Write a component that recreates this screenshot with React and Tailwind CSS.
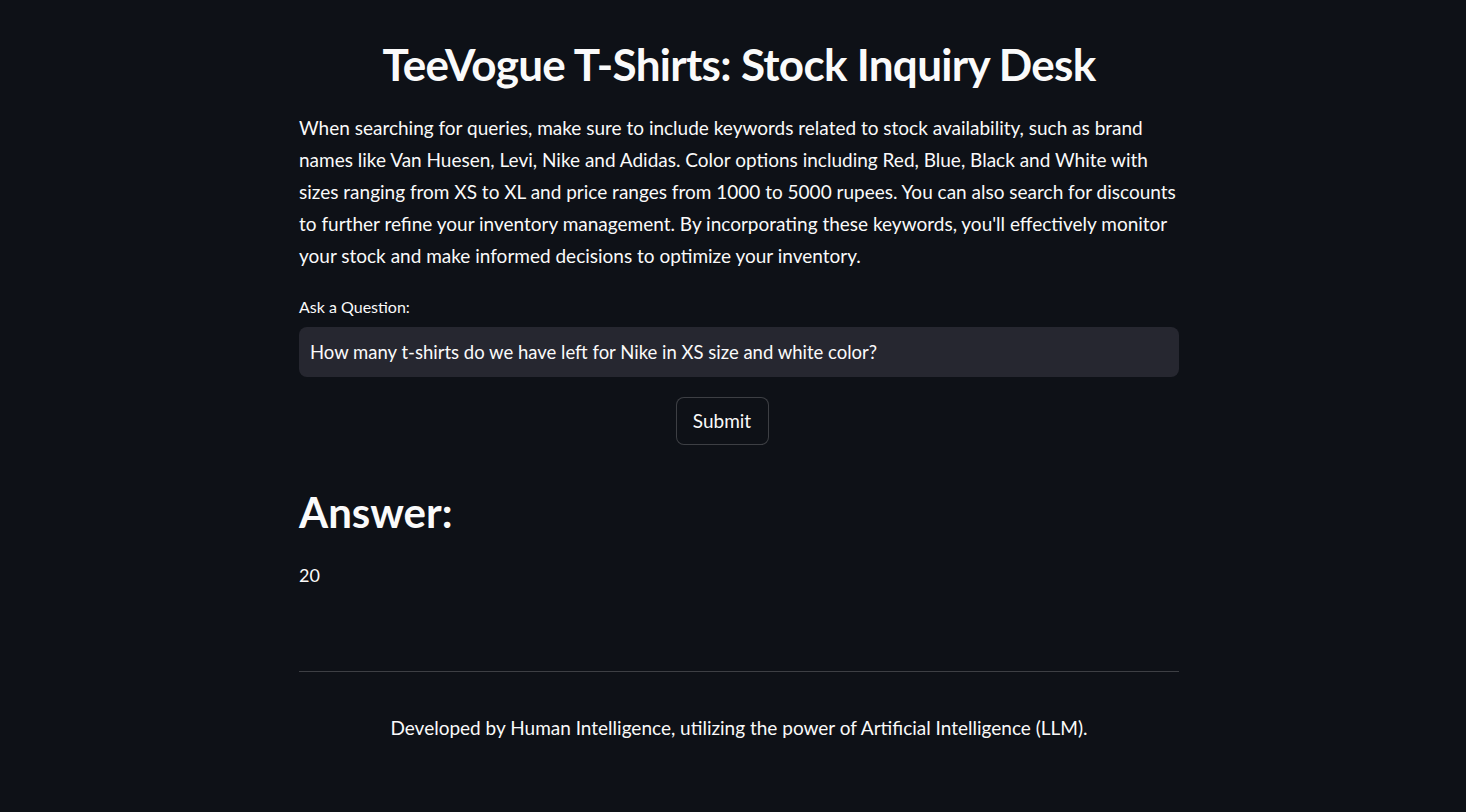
import React, { useState } from "react";

function App() {
  const [question, setQuestion] = useState(
    "How many t-shirts do we have left for Nike in XS size and white color?"
  );

  return (
    <div
      className="min-h-screen w-full bg-[#0e1117] text-[#fafafa]"
      style={{ fontFamily: "Lato, 'Liberation Sans', sans-serif" }}
    >
      <div className="mx-auto w-[880px] translate-x-[6px] pt-[36px]">
        {/* Title */}
        <h1 className="text-center text-[44px] font-bold leading-[56px] tracking-[-0.7px]">
          TeeVogue T-Shirts: Stock Inquiry Desk
        </h1>

        {/* Intro */}
        <p className="mt-[20px] text-[19px] leading-[32px]">
          When searching for queries, make sure to include keywords related to stock availability, such as brand
          <br />
          names like Van Huesen, Levi, Nike and Adidas. Color options including Red, Blue, Black and White with
          <br />
          sizes ranging from XS to XL and price ranges from 1000 to 5000 rupees. You can also search for discounts
          <br />
          to further refine your inventory management. By incorporating these keywords, you'll effectively monitor
          <br />
          your stock and make informed decisions to optimize your inventory.
        </p>

        {/* Question input */}
        <label className="mt-[24px] block text-[16px] leading-[22px]">Ask a Question:</label>
        <input
          value={question}
          onChange={(e) => setQuestion(e.target.value)}
          className="mt-[9px] h-[50px] w-full rounded-lg bg-[#262730] px-[11px] text-[18.5px] text-[#fafafa] outline-none"
        />

        <div className="mt-[20px] flex justify-center">
          <button className="-translate-x-[17px] h-[48px] w-[93px] rounded-lg border border-[#fafafa]/20 bg-[#0e1117] text-[19px]">
            Submit
          </button>
        </div>

        {/* Answer */}
        <h2 className="mt-[39px] text-[42px] font-bold leading-[56px]">Answer:</h2>
        <p className="mt-[19px] text-[18px] leading-[32px]">20</p>

        {/* Footer */}
        <hr className="mt-[80px] border-0 border-t border-[#fafafa]/20" />
        <p className="mt-[40px] text-center text-[19px] leading-[32px]">
          Developed by Human Intelligence, utilizing the power of Artificial Intelligence (LLM).
        </p>
      </div>
    </div>
  );
}

export default App;
